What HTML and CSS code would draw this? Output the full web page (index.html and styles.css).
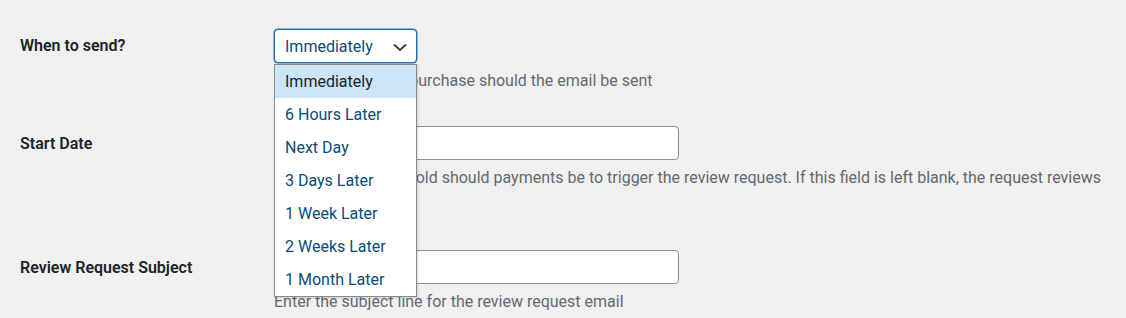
FILE: index.html
```html
<!DOCTYPE html>
<html lang="en">
<head>
    <meta charset="UTF-8">
    <title>Review Request Settings</title>
    <link rel="stylesheet" href="styles.css">
</head>
<body>
    <div class="form-table">
        <div class="row">
            <div class="label">When to send?</div>
            <div class="field">
                <div class="select-wrap">
                    <div class="select">
                        <span>Immediately</span>
                        <svg class="chevron" width="16" height="16" viewBox="0 0 16 16">
                            <path d="M2 5.5 L8 11 L14 5.5" fill="none" stroke="#3c434a" stroke-width="2"/>
                        </svg>
                    </div>
                    <ul class="dropdown">
                        <li class="active">Immediately</li>
                        <li>6 Hours Later</li>
                        <li>Next Day</li>
                        <li>3 Days Later</li>
                        <li>1 Week Later</li>
                        <li>2 Weeks Later</li>
                        <li>1 Month Later</li>
                    </ul>
                </div>
                <p class="description">How long after the purchase should the email be sent</p>
            </div>
        </div>

        <div class="row">
            <div class="label">Start Date</div>
            <div class="field">
                <input type="text" class="text-input">
                <p class="description">Set how many days old should payments be to trigger the review request. If this field is left blank, the request reviews will always be sent.</p>
            </div>
        </div>

        <div class="row">
            <div class="label">Review Request Subject</div>
            <div class="field">
                <input type="text" class="text-input">
                <p class="description">Enter the subject line for the review request email</p>
            </div>
        </div>
    </div>
</body>
</html>
```

FILE: styles.css
```css
* {
    margin: 0;
    padding: 0;
    box-sizing: border-box;
}

body {
    font-family: Roboto, 'Noto Sans', sans-serif;
    background: #f0f0f1;
    color: #3c434a;
    font-size: 16px;
}

.form-table {
    display: flex;
    flex-direction: column;
    gap: 32px;
    padding: 29px 10px 0 20px;
}

.row {
    display: grid;
    grid-template-columns: 254px 1fr;
}

.label {
    font-size: 16px;
    font-weight: 600;
    color: #1d2327;
    line-height: 34px;
}

.row + .row .label {
    line-height: 35px;
}

.select-wrap {
    position: relative;
    width: 143px;
}

.select {
    height: 34px;
    border: 1px solid #2271b1;
    box-shadow: 0 0 0 0.5px #2271b1;
    border-radius: 4px;
    background: #fff;
    display: flex;
    align-items: center;
    justify-content: space-between;
    padding: 0 8px 0 10px;
    font-size: 16px;
    color: #0a4b78;
}

.chevron {
    margin-top: 1px;
}

.dropdown {
    position: absolute;
    top: 35px;
    left: 0;
    width: 143px;
    list-style: none;
    background: #fff;
    border: 1px solid #8a8a8a;
    box-shadow: 1px 1px 2px rgba(0,0,0,0.15);
    z-index: 10;
}

.dropdown li {
    height: 33px;
    line-height: 33px;
    padding-left: 10px;
    font-size: 16px;
    color: #0a4b78;
}

.dropdown li.active {
    background: #cce5f8;
    color: #1d2327;
}

.text-input {
    display: block;
    width: 405px;
    height: 34px;
    border: 1px solid #8c8f94;
    border-radius: 4px;
    background: #fff;
}

.description {
    margin-top: 4px;
    font-size: 16px;
    line-height: 27px;
    color: #646970;
}
```
